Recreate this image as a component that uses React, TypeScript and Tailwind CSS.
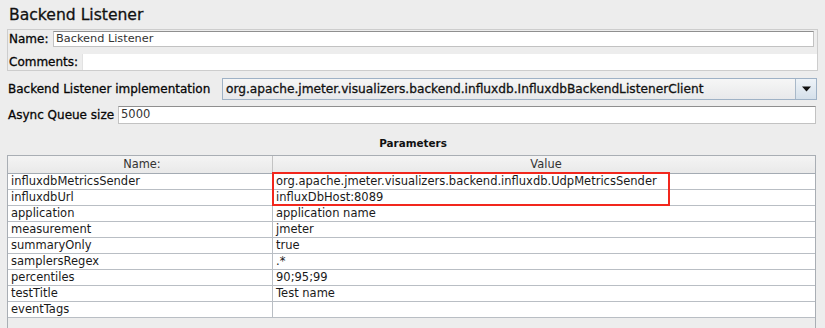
const rows: [string, string][] = [
  ['influxdbMetricsSender', 'org.apache.jmeter.visualizers.backend.influxdb.UdpMetricsSender'],
  ['influxdbUrl', 'influxDbHost:8089'],
  ['application', 'application name'],
  ['measurement', 'jmeter'],
  ['summaryOnly', 'true'],
  ['samplersRegex', '.*'],
  ['percentiles', '90;95;99'],
  ['testTitle', 'Test name'],
  ['eventTags', ''],
];

// mac-style text is a bit heavier than plain DejaVu
const heavy = '[-webkit-text-stroke:0.3px_#111]';

const field =
  'bg-white border border-[#c2c2c2] border-t-[#8f8f8f] h-full flex items-center pl-[2px] text-[11.3px] text-[#333] leading-none';

const App = () => {
  return (
    <div className="relative w-[825px] h-[328px] overflow-hidden bg-[#ededed] font-['DejaVu_Sans',sans-serif] text-black">
      <div className={`h-[29px] pt-[5px] pl-[9px] text-[15.6px] leading-[20px] text-[#111] ${heavy}`}>
        Backend Listener
      </div>

      {/* name / comments box */}
      <div className="mx-[7px] h-[42px] border border-[#cdcdcd] pt-[1px] pl-[1px] flex flex-col gap-[7px]">
        <div className="h-[16px] flex items-center">
          <span className={`text-[12px] pr-[4px] w-[44px] ${heavy}`}>Name:</span>
          <div className={`${field} flex-1 mr-[3px]`}>Backend Listener</div>
        </div>
        <div className="h-[16px] flex items-center">
          <span className={`text-[12px] w-[73px] ${heavy}`}>Comments:</span>
          <div className="bg-white h-full flex-1 border-l border-[#e2e2e2]" />
        </div>
      </div>

      {/* implementation combo */}
      <div className="mt-[7px] h-[22px] pl-[8px] pr-[8px] flex items-center">
        <span className={`text-[12px] w-[214px] ${heavy}`}>Backend Listener implementation</span>
        <div className="flex-1 h-full flex border border-[#9fb2c6] bg-gradient-to-b from-[#f6f6f6] to-[#e8e9eb]">
          <div className={`flex-1 flex items-center pl-[3px] text-[12.2px] text-[#111] ${heavy}`}>
            org.apache.jmeter.visualizers.backend.influxdb.InfluxdbBackendListenerClient
          </div>
          <div className="w-[21px] border-l border-[#a9b9c9] bg-gradient-to-b from-[#eef3f8] to-[#d5e0ea] flex items-center justify-center">
            <svg width="9" height="6" viewBox="0 0 9 6">
              <path d="M0 0.5h9L4.5 5.5z" fill="#111" />
            </svg>
          </div>
        </div>
      </div>

      {/* async queue */}
      <div className="mt-[6px] h-[18px] pl-[8px] pr-[9px] flex items-center">
        <span className={`text-[12px] w-[110px] ${heavy}`}>Async Queue size</span>
        <div className={`${field} flex-1 text-[11.5px]`}>5000</div>
      </div>

      <div className="h-[31px] flex justify-center pt-[12px] pl-[1px] text-[10.4px] font-bold leading-[14px] text-[#111]">
        Parameters
      </div>

      {/* parameter table */}
      <div className="ml-[7px] mr-[9px] h-[200px] border-l border-t border-r border-[#a9aeb4]">
        <div className="h-[18px] flex border-b border-[#a4abb3] bg-gradient-to-b from-[#f4f4f4] to-[#e9e9e9] text-[11.4px] text-[#333]">
          <div className="w-[265px] border-r border-[#c3c3c3] flex items-center justify-center pl-[4px]">Name:</div>
          <div className="flex-1 flex items-center justify-center pl-[4px]">Value</div>
        </div>
        {rows.map(([name, value]) => (
          <div
            key={name}
            className="h-[16px] flex bg-white border-b border-[#b9bec4] text-[11.5px] text-[#1a1a1a] leading-none"
          >
            <div className="w-[265px] border-r border-[#b9bec4] flex items-center pl-[3px]">{name}</div>
            <div className="flex-1 flex items-center pl-[3px]">{value}</div>
          </div>
        ))}
      </div>

      {/* highlight */}
      <div className="absolute left-[272px] top-[172px] w-[398px] h-[34px] border-2 border-[#f2271d]" />
    </div>
  );
};

export default App;
